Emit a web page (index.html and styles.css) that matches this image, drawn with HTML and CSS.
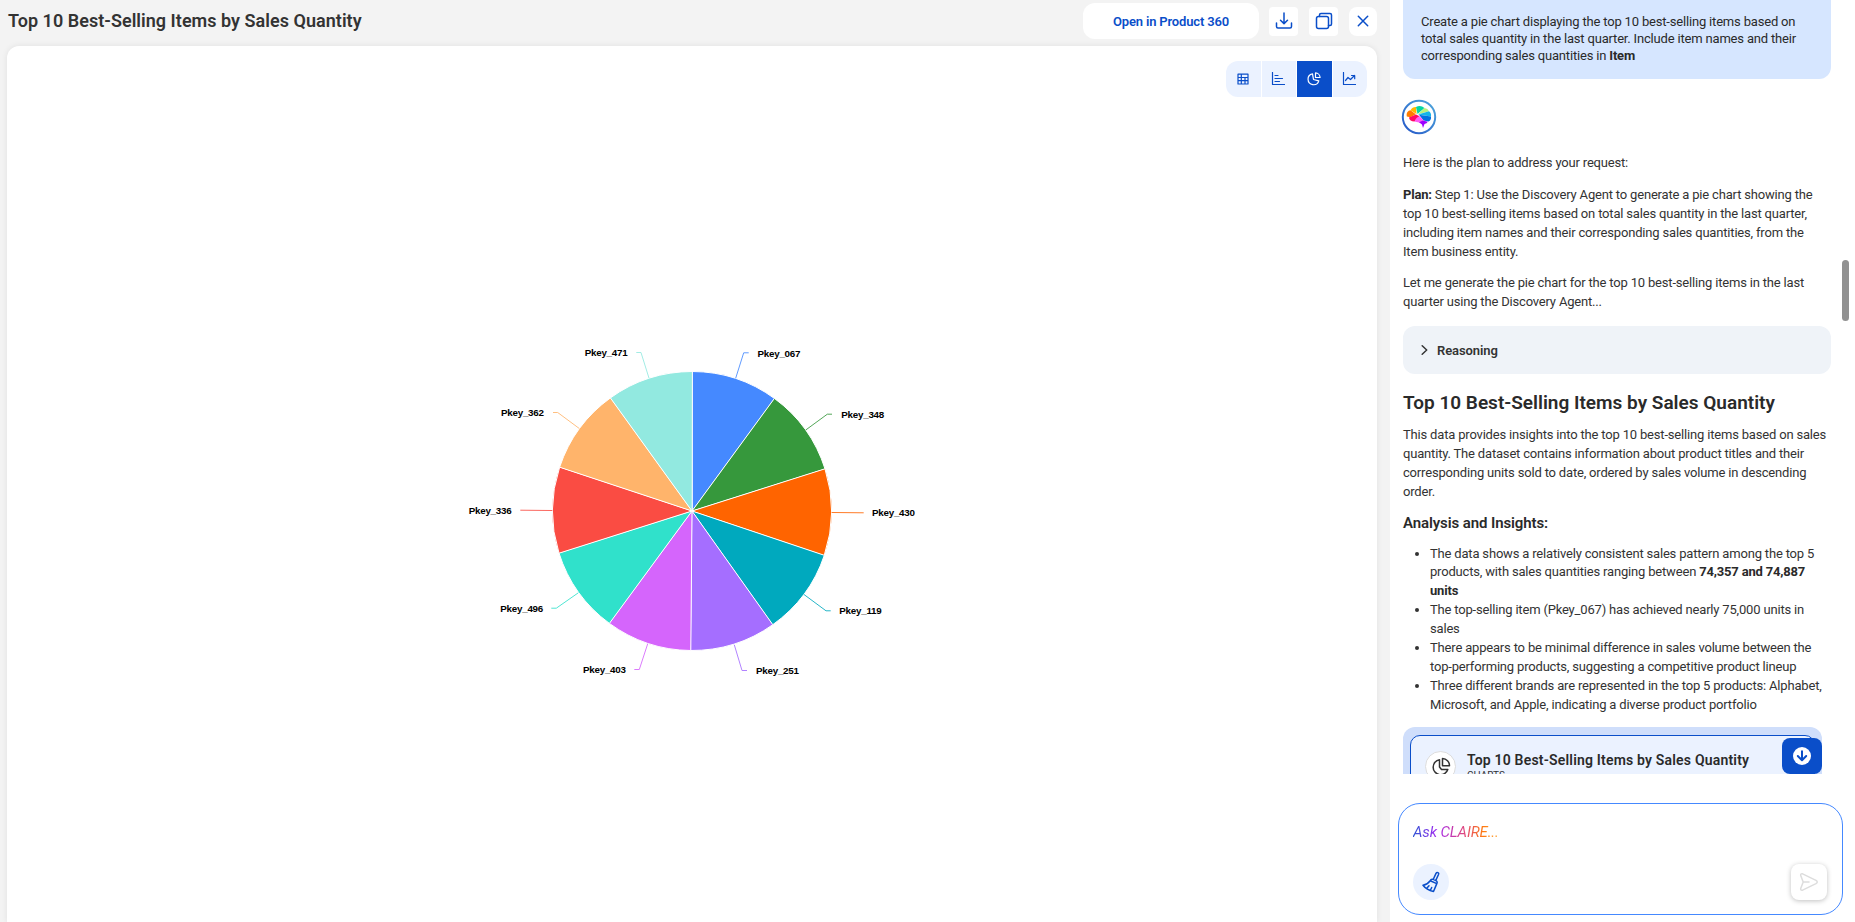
FILE: index.html
```
<!doctype html>
<html lang="en">
<head>
	<meta charset="UTF-8" />
	<title>Top 10 Best-Selling Items by Sales Quantity</title>
	<link rel="stylesheet" href="styles.css">
</head>
<body>
	<div id="container">
		<div id="viewer">
			<div class="viewer_header">
				<h1>Top 10 Best-Selling Items by Sales Quantity</h1>
				<button class="btn_open">Open in Product 360</button>
				<button class="btn_icon">
					<svg width="18" height="18" viewBox="0 0 18 18"><path d="M9 1v10.500M5.500 8.200L9 11.600l3.500-3.400M1.500 11v3.500q0 1.500 1.500 1.500h12q1.500 0 1.500-1.500V11"/></svg>
				</button>
				<button class="btn_icon">
					<svg width="18" height="18" viewBox="0 0 18 18"><rect x="1.500" y="4.500" width="12" height="12" rx="2"/><path d="M4.500 4.500V3q0-1.500 1.500-1.500h9q1.500 0 1.500 1.500v9q0 1.500-1.500 1.500h-1.500"/></svg>
				</button>
				<button class="btn_icon close">
					<svg width="12" height="12" viewBox="0 0 12 12"><path d="M1.300 1.300l9.400 9.400M10.700 1.300l-9.400 9.400"/></svg>
				</button>
			</div>
			<div class="viewer_card">
				<div class="chart_types">
					<button><svg width="12" height="12" viewBox="0 0 12 12"><path d="M1 1.200h10v9.800H1zM1 4.500h10M1 7.700h10M4.300 1.200v9.800M8 4.500v6.500"/></svg></button>
					<button><svg width="14" height="14" viewBox="0 0 14 14"><path d="M1.500.5v12h12M4 3.500h3M4 6.500h7.500M4 9.500h4.500"/></svg></button>
					<button class="on"><svg width="14" height="14" viewBox="0 0 14 14"><path d="M5.500 1.800a5.500 5.500 0 1 0 6.300 7L6.500 7.500z"/><path d="M8.500.9v4.600h4.600A4.800 4.800 0 0 0 8.500.9z"/></svg></button>
					<button><svg width="14" height="14" viewBox="0 0 14 14"><path d="M1.500.5v12h12M3.500 8.500l2.500-3 2.500 2 4-4M9.500 3.500h3.200v3.200"/></svg></button>
				</div>
				<div class="chart">
					<svg width="500" height="350" viewBox="-250 -175 500 350">
						<g class="slices">
							<path fill="#4589ff" d="M0 0L0-139.500A139.500 139.500 0 0 1 82.400-112.600z"/>
							<path fill="#36983c" d="M0 0L82.400-112.600A139.500 139.500 0 0 1 133-42.200z"/>
							<path fill="#ff6400" d="M0 0L133-42.200A139.500 139.500 0 0 1 132.300 44.300z"/>
							<path fill="#00a9be" d="M0 0L132.300 44.300A139.500 139.500 0 0 1 80.800 113.700z"/>
							<path fill="#a56eff" d="M0 0L80.800 113.700A139.500 139.500 0 0 1-1.200 139.500z"/>
							<path fill="#d565fc" d="M0 0L-1.200 139.500A139.500 139.500 0 0 1-82.600 112.400z"/>
							<path fill="#30e1cb" d="M0 0L-82.600 112.400A139.500 139.500 0 0 1-133 42.200z"/>
							<path fill="#fa4c43" d="M0 0L-133 42.200A139.500 139.500 0 0 1-132.400-43.800z"/>
							<path fill="#ffb46b" d="M0 0L-132.400-43.800A139.500 139.500 0 0 1-81.600-113.100z"/>
							<path fill="#92e9e0" d="M0 0L-81.600-113.100A139.500 139.500 0 0 1 0-139.500z"/>
						</g>
						<g class="leaders">
							<path stroke="#4589ff" d="M43.700-132.800L51.700-158.200H56.700"/>
							<path stroke="#36983c" d="M114-81.200L135.300-96.800H140"/>
							<path stroke="#ff6400" d="M139.700 1.500L171.700 1.800"/>
							<path stroke="#00a9be" d="M112 83.500L134 99.800H138.700"/>
							<path stroke="#a56eff" d="M42.300 133.800L50 159.500H55"/>
							<path stroke="#d565fc" d="M-44.300 132.800L-52.700 158.500H-57.700"/>
							<path stroke="#30e1cb" d="M-113.700 81.800L-135.700 97.200H-140.700"/>
							<path stroke="#fa4c43" d="M-139.700-.5L-171.700-.8"/>
							<path stroke="#ffb46b" d="M-112.700-82.500L-134.300-98.500H-139"/>
							<path stroke="#92e9e0" d="M-43-132.800L-51-158.500H-55.700"/>
						</g>
						<g class="labels">
							<text x="65.500" y="-154">Pkey_067</text>
							<text x="149.300" y="-93">Pkey_348</text>
							<text x="180" y="5">Pkey_430</text>
							<text x="147.300" y="103">Pkey_119</text>
							<text x="64" y="163">Pkey_251</text>
							<text x="-109" y="162">Pkey_403</text>
							<text x="-191.700" y="101">Pkey_496</text>
							<text x="-223.300" y="3">Pkey_336</text>
							<text x="-191" y="-95">Pkey_362</text>
							<text x="-107.300" y="-155">Pkey_471</text>
						</g>
					</svg>
				</div>
			</div>
		</div>

		<div id="chat">
			<div class="messages">
				<div class="question">Create a pie chart displaying the top 10 best-selling items based on<br>total sales quantity in the last quarter. Include item names and their<br>corresponding sales quantities in <b>Item</b></div>
				<svg class="logo" width="36" height="36" viewBox="0 0 36 36">
					<defs>
						<linearGradient id="ring" x1="0" y1="1" x2="1" y2="0">
							<stop offset="0" stop-color="#2456c8"/>
							<stop offset="1" stop-color="#4fa8dc"/>
						</linearGradient>
					</defs>
					<circle cx="18" cy="18" r="16.200" fill="#fff" stroke="url(#ring)" stroke-width="2"/>
					<path fill="#ff7a00" d="M5.800 17.500C5 14 7 11.500 9.500 11.300L14.800 15.200 9.500 18.200z"/>
					<path fill="#ffb700" d="M9.500 11.300Q11.500 7.800 15 8L15.500 15z"/>
					<path fill="#05d6a1" d="M15 8Q19.500 5.600 23.500 9L16.500 15z"/>
					<path fill="#b8f07c" d="M23.500 9Q27 9.500 28 12.300L17 15.300z"/>
					<path fill="#12b5ea" d="M28 12.300Q30.500 14 30 17.500L17 15.500z"/>
					<path fill="#0070e0" d="M30 17.500Q30.500 21 27.500 22.500L22.500 21.500 18 15.700z"/>
					<path fill="#ff0a62" d="M8 18.500L15 15.500 18.500 17.200 13.500 22.500Q8.500 22.500 8 18.500z"/>
					<path fill="#ff5cf4" d="M13.500 22.500Q15 18 18.500 17.200L22.800 21.500 19 23.800z"/>
					<path fill="#9d00ff" d="M18 23.300L22 21.500 26.800 22.800Q26 24.500 23.500 25L22 29 21 25.500z"/>
				</svg>
				<div class="answer">
					<p>Here is the plan to address your request:</p>
					<p><b>Plan:</b> Step 1: Use the Discovery Agent to generate a pie chart showing the<br>top 10 best-selling items based on total sales quantity in the last quarter,<br>including item names and their corresponding sales quantities, from the<br>Item business entity.</p>
					<p>Let me generate the pie chart for the top 10 best-selling items in the last<br>quarter using the Discovery Agent...</p>
					<div class="reasoning">
						<svg width="7" height="10" viewBox="0 0 7 10"><path d="M1.200.8L5.700 5 1.200 9.200"/></svg>
						<span>Reasoning</span>
					</div>
					<h2>Top 10 Best-Selling Items by Sales Quantity</h2>
					<p>This data provides insights into the top 10 best-selling items based on sales<br>quantity. The dataset contains information about product titles and their<br>corresponding units sold to date, ordered by sales volume in descending<br>order.</p>
					<h3>Analysis and Insights:</h3>
					<ul>
						<li>The data shows a relatively consistent sales pattern among the top 5<br>products, with sales quantities ranging between <b>74,357 and 74,887<br>units</b></li>
						<li>The top-selling item (Pkey_067) has achieved nearly 75,000 units in<br>sales</li>
						<li>There appears to be minimal difference in sales volume between the<br>top-performing products, suggesting a competitive product lineup</li>
						<li>Three different brands are represented in the top 5 products: Alphabet,<br>Microsoft, and Apple, indicating a diverse product portfolio</li>
					</ul>
				</div>
				<div class="attachment">
					<div class="attachment_box">
						<span class="type_icon"><svg width="20" height="20" viewBox="0 0 20 20"><path d="M8.500 2.800a7.500 7.500 0 1 0 8.300 9.700H10.500L8.500 10z"/><path d="M11.500 1.500v7.300h7A7.200 7.200 0 0 0 11.500 1.500z"/></svg></span>
						<div>
							<strong>Top 10 Best-Selling Items by Sales Quantity</strong>
							<small>CHARTS</small>
						</div>
					</div>
				</div>
				<button class="btn_down">
					<svg width="18" height="18" viewBox="0 0 18 18"><circle cx="9" cy="9" r="9"/><path d="M9 4.300v8.700M4.800 9L9 13.200 13.200 9"/></svg>
				</button>
			</div>
			<div class="scrollbar"></div>
			<div class="ask">
				<span class="placeholder">Ask CLAIRE...</span>
				<div class="ask_tools">
					<button class="btn_clear">
						<svg width="20" height="22" viewBox="0 0 20 22"><path d="M12.300 8.300L15 2.400q.7-1.300 1.900-.8t.6 1.900L14.800 9.400M9.200 9.700q.8-2 3-1.300l2.700 1.200q2 1 .9 3zM9.200 9.700Q6.500 13.500 2 14.300 5.500 19 12.500 20.500 14 17 15.800 12.600M6 17l2-2.200M9.500 19l1.200-2.500"/></svg>
					</button>
					<button class="btn_send">
						<svg width="20" height="20" viewBox="0 0 20 20"><path d="M4.200 10L1.700 3.600Q1.300 1.300 3.600 1.800L17 8.300Q19.500 10 17 11.700L3.600 18.200Q1.300 18.700 1.700 16.400zM4.200 10H10"/></svg>
					</button>
				</div>
			</div>
		</div>
	</div>
</body>
</html>
```
FILE: styles.css
```
* { margin: 0; padding: 0; box-sizing: border-box; }
html, body { width: 100%; height: 100%; overflow: hidden; }
body { font-family: Roboto, "Liberation Sans", sans-serif; font-size: 13px; color: #333; background: #fff; }
button { display: flex; align-items: center; justify-content: center; border: 0; font-family: inherit; color: #0a4ec9; background: #fff; }
svg { display: block; flex: none; fill: none; stroke: currentColor; stroke-width: 1.5; stroke-linecap: round; stroke-linejoin: round; }
b { font-weight: 700; color: #2a2a2a; }

#container { display: flex; height: 100vh; }

/* chart viewer */
#viewer { width: 1390px; display: flex; flex-direction: column; padding: 0 13px 0 7px; background: #f3f3f3; }
.viewer_header { height: 46px; display: flex; align-items: center; padding: 0 0 4px 1px; }
.viewer_header h1 { flex: 1; font-size: 18px; font-weight: 600; line-height: 24px; letter-spacing: .03px; color: #333; }
.btn_open { width: 176px; height: 36px; margin-right: 10px; border-radius: 12px; font-size: 13px; font-weight: 600; letter-spacing: -.17px; }
.btn_icon { width: 29px; height: 29px; margin-right: 11px; border-radius: 4px; }
.btn_icon.close { width: 28px; margin-right: 0; border-radius: 8px; }
.viewer_card { flex: 1; display: flex; flex-direction: column; border-radius: 12px 12px 0 0; background: #fff; box-shadow: 0 0 6px rgba(0, 0, 0, .08); }
.chart_types { height: 53px; display: flex; justify-content: flex-end; gap: 1px; padding: 15px 10px 2px 0; }
.chart_types button { width: 34.500px; height: 36px; padding: 0 1px 1px 0; background: #ebf2ff; }
.chart_types button:first-child { border-radius: 12px 0 0 12px; }
.chart_types button:last-child { border-radius: 0 12px 12px 0; }
.chart_types button.on { color: #fff; background: #0a4ec9; }
.chart_types svg { stroke-width: 1.200; }
.chart { flex: 1; display: flex; align-items: center; justify-content: center; }
.slices { stroke: #fff; stroke-width: 1; }
.leaders { stroke-width: 1; stroke-linecap: butt; opacity: .85; }
.labels { fill: #000; stroke: none; font-family: "Liberation Sans", Arial, sans-serif; font-size: 9.800px; font-weight: 700; letter-spacing: -.25px; }

/* chat */
#chat { flex: 1; position: relative; display: flex; flex-direction: column; padding: 0 12px 7px 8px; }
.messages { height: 774px; position: relative; overflow: hidden; padding-left: 5px; }
.question { width: 428px; height: 79px; padding: 13px 18px 0; border-radius: 0 0 12px 12px; line-height: 17px; letter-spacing: -.18px; white-space: nowrap; color: #2a2a2a; background: #d6e6ff; }
.logo { margin: 20px 0 0 -2.500px; }
.logo path { stroke: none; }
.answer { width: 428px; padding-top: 18px; line-height: 19px; letter-spacing: -.18px; white-space: nowrap; }
.answer p { margin-bottom: 12.500px; }
.reasoning { height: 48px; display: flex; align-items: center; gap: 9px; margin: 15px 0 16px; padding-left: 18px; border-radius: 12px; font-weight: 600; letter-spacing: -.1px; background: #eff3f8; }
.answer h2 { margin-bottom: 10px; font-size: 19px; font-weight: 600; line-height: 25px; letter-spacing: 0; color: #2a2a2a; }
.answer h3 { margin-bottom: 12px; font-size: 15px; font-weight: 600; line-height: 19px; letter-spacing: -.1px; color: #2a2a2a; }
.answer ul { padding-left: 27px; line-height: 18.875px; }
.attachment { width: 419px; height: 100px; margin-top: 13px; padding: 8px 7px; border-radius: 12px; background: #cfdefb; }
.attachment_box { height: 80px; display: flex; gap: 11px; padding: 15px 14px; border: 1px solid #0a4ec9; border-radius: 10px; background: #ebf2ff; }
.type_icon { width: 31px; height: 31px; display: flex; align-items: center; justify-content: center; border: 1px solid #ddd; border-radius: 50%; background: #fff; }
.attachment_box strong { display: block; font-size: 14px; font-weight: 600; line-height: 18px; letter-spacing: .19px; color: #2a2a2a; }
.attachment_box small { display: block; font-size: 10px; line-height: 14px; }
.btn_down { width: 40px; height: 36px; position: absolute; left: 384px; bottom: 0; border-radius: 8px; background: #0a4ec9; }
.btn_down circle { fill: #fff; stroke: none; }
.btn_down path { stroke: #0a4ec9; stroke-width: 2; }
.scrollbar { width: 7px; height: 61px; position: absolute; right: 6px; top: 260px; border-radius: 4px; background: #919191; }

.ask { width: 445px; height: 112px; display: flex; flex-direction: column; justify-content: space-between; margin-top: 29px; padding: 18px 15px 14px 14px; border: 1px solid #4589ff; border-radius: 22px; }
.placeholder { align-self: flex-start; font-size: 15px; font-style: italic; line-height: 20px; letter-spacing: -.15px; color: transparent; background: linear-gradient(90deg, #2e55d4, #a22af0 28%, #e0487c 60%, #ff7b10 82%, #ffab40); -webkit-background-clip: text; background-clip: text; }
.ask_tools { display: flex; justify-content: space-between; }
.btn_clear { width: 36px; height: 36px; border-radius: 50%; background: #ebf2ff; }
.btn_send { width: 36px; height: 36px; border-radius: 8px; color: #ddd; box-shadow: 0 1px 5px rgba(0, 0, 0, .25); }
```
